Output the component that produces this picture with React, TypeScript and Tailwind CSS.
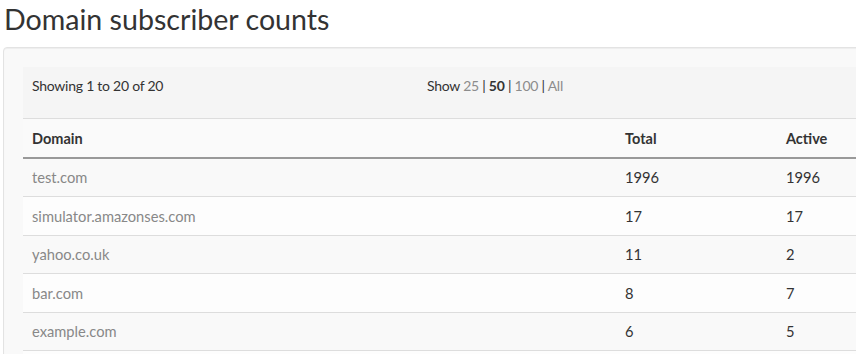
import React from 'react';

const rows = [
  { domain: 'test.com', total: 1996, active: 1996 },
  { domain: 'simulator.amazonses.com', total: 17, active: 17 },
  { domain: 'yahoo.co.uk', total: 11, active: 2 },
  { domain: 'bar.com', total: 8, active: 7 },
  { domain: 'example.com', total: 6, active: 5 },
];

export default function App() {
  return (
    <div className="w-[856px] h-[354px] overflow-hidden bg-white text-[#333] font-['Lato',sans-serif]">
      <h1 className="pl-[4px] pt-[3px] h-[47px] text-[28.6px] leading-[33px] font-normal">
        Domain subscriber counts
      </h1>
      <div className="ml-[3px] w-[1000px] rounded border border-[#e3e3e3] bg-[#f9f9f9] p-[19px] shadow-[inset_0_1px_1px_rgba(0,0,0,0.05)]">
        <div className="flex h-[52px] border-b border-[#ddd] bg-[#f5f5f5] px-[9px] pt-[9px] text-[14px] leading-[20px] tracking-[-0.25px]">
          <div className="w-[395px]">Showing 1 to 20 of 20</div>
          <div>
            Show <span className="text-[#8c8c8c]">25</span> | <b>50</b> |{' '}
            <span className="text-[#8c8c8c]">100</span> | <span className="text-[#8c8c8c]">All</span>
          </div>
        </div>
        <div className="flex h-[40px] items-center border-b-2 border-[#999] bg-[#fafafa] pt-[1px] text-[14.5px] font-bold">
          <div className="w-[593px] pl-[9px]">Domain</div>
          <div className="w-[161px] pl-[9px]">Total</div>
          <div className="pl-[9px]">Active</div>
        </div>
        {rows.map((r, i) => (
          <div
            key={r.domain}
            className={`flex items-center border-b border-[#ddd] text-[14.7px] ${i % 2 === 0 ? 'h-[38px] bg-[#f9f9f9]' : 'h-[39px] bg-[#fdfdfd]'}`}
          >
            <div className="w-[593px] pl-[9px] text-[#888]">{r.domain}</div>
            <div className="w-[161px] pl-[9px]">{r.total}</div>
            <div className="pl-[9px]">{r.active}</div>
          </div>
        ))}
        <div className="h-[39px] bg-[#fdfdfd]" />
      </div>
    </div>
  );
}
